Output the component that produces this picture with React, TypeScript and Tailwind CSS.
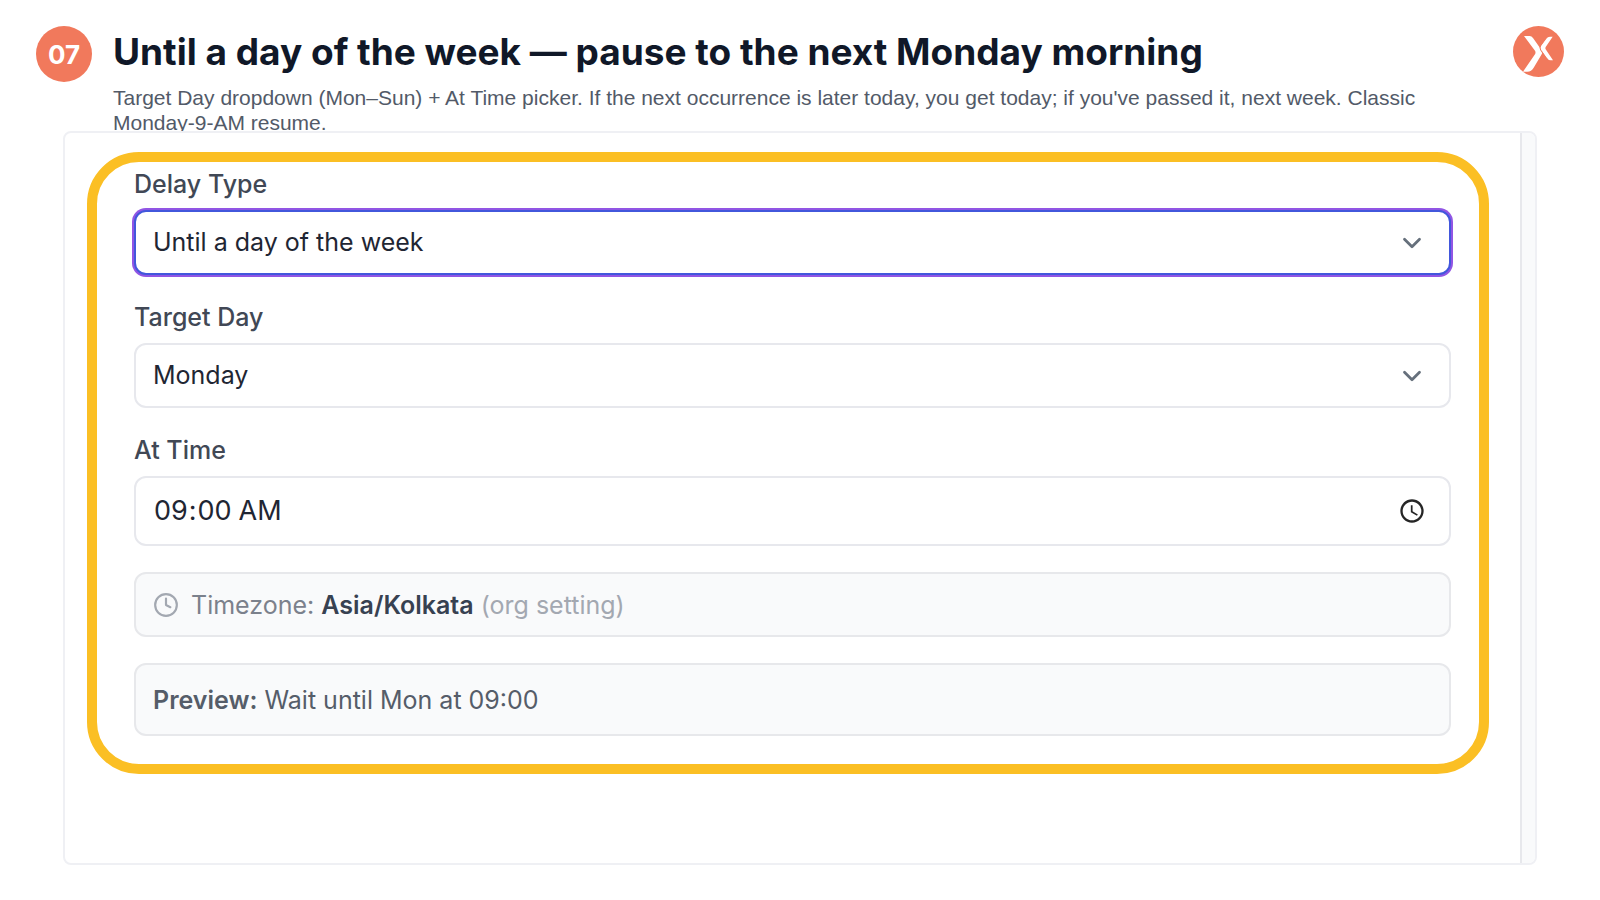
import { useState } from "react";
import type { ReactNode } from "react";
import { ChevronDown, Clock } from "lucide-react";

const DELAY_TYPES = ["Until a day of the week", "For a set period", "Until a date"];
const DAYS = ["Monday", "Tuesday", "Wednesday", "Thursday", "Friday", "Saturday", "Sunday"];

function Logo() {
  return (
    <svg viewBox="0 0 153 153" className="size-[51px] shrink-0" role="img" aria-label="Logo">
      <circle cx="76.5" cy="76.5" r="76.5" fill="#f1795c" />
      <path
        fill="#fff"
        d="M33 30H50Q56 30 60 36L86 73Q90 79 86 85L62 125Q55 137 43 137H30L66 85Q69 79 66 74Z"
      />
      <path fill="#fff" d="M119 32H111Q104 32 100 38L84 60Q80 65 84 71L100 94Q106 103 113 103H120L98 70Q96 67 98 63Z" />
      <path fill="none" stroke="#f1795c" strokeWidth="3" d="M100 34L83 58Q79 65 83 72L101 99" />
    </svg>
  );
}

function Field({ id, label, children }: { id: string; label: string; children: ReactNode }) {
  return (
    <div className="flex flex-col gap-2.5">
      <label htmlFor={id} className="self-start font-medium text-[#414855]">
        {label}
      </label>
      {children}
    </div>
  );
}

function SelectBox({ id, options, active = false }: { id: string; options: string[]; active?: boolean }) {
  const [value, setValue] = useState(options[0]);
  return (
    <div className="relative">
      <select
        id={id}
        value={value}
        onChange={(e) => setValue(e.target.value)}
        className={
          active
            ? "block h-[65px] w-full appearance-none rounded-xl border-2 border-[#4257dc] bg-white px-[17px] pb-0.5 text-[#1f2633] ring-2 ring-[#9155e4] outline-none"
            : "block h-[65px] w-full appearance-none rounded-xl border-2 border-[#e7e8ed] bg-white px-[17px] pb-0.5 text-[#1f2633] outline-none"
        }
      >
        {options.map((o) => (
          <option key={o}>{o}</option>
        ))}
      </select>
      <ChevronDown
        className="pointer-events-none absolute inset-y-0 right-6 my-auto size-[30px] text-[#66707c]"
        strokeWidth={2.25}
      />
    </div>
  );
}

export default function App() {
  return (
    <main className="flex min-h-screen flex-col bg-white font-['Inter','Liberation_Sans',sans-serif]">
      <header className="flex items-start px-9 pt-[26px]">
        <span className="flex size-14 shrink-0 items-center justify-center rounded-full bg-[#f1795c] text-[26px] font-bold text-white">
          07
        </span>
        <div className="ml-[21px] flex-1">
          <h1 className="text-[37px] leading-[52px] font-bold text-[#101828]">
            Until a day of the week — pause to the next Monday morning
          </h1>
          <p className="mt-[7px] max-w-[1340px] font-['Liberation_Sans',sans-serif] text-[21px] leading-[25px] text-[#525a68]">
            Target Day dropdown (Mon–Sun) + At Time picker. If the next occurrence is later today, you get today; if
            you've passed it, next week. Classic Monday-9-AM resume.
          </p>
        </div>
        <Logo />
      </header>

      <section className="relative mx-[63px] -mt-1 mb-[35px] flex flex-1 overflow-hidden rounded-lg border-2 border-[#eff0f4] bg-white">
        <div className="flex-1 pt-[19px] pr-[31px] pl-[22px]">
          <form className="flex flex-col gap-[26px] rounded-[52px] border-10 border-[#fbbf24] pt-1.5 pr-7 pb-7 pl-[37px] text-[25px] leading-8">
            <Field id="delay-type" label="Delay Type">
              <SelectBox id="delay-type" options={DELAY_TYPES} active />
            </Field>
            <Field id="target-day" label="Target Day">
              <SelectBox id="target-day" options={DAYS} />
            </Field>
            <Field id="at-time" label="At Time">
              <input
                id="at-time"
                type="time"
                defaultValue="09:00"
                className="block h-[70px] w-full rounded-xl border-2 border-[#e7e8ed] bg-white pr-5 pl-[17px] text-[27px] text-[#1f2633] outline-none [&::-webkit-calendar-picker-indicator]:opacity-85"
              />
            </Field>
            <p className="flex h-[65px] items-center rounded-xl border-2 border-[#e7e8eb] bg-[#f9fafb] px-[17px] text-[#7b818c]">
              <Clock className="mr-3 size-[26px] text-[#a3a8b1]" strokeWidth={2} />
              <span>
                Timezone: <strong className="font-semibold text-[#374151]">Asia/Kolkata</strong>{" "}
                <span className="text-[#a3a8b1]">(org setting)</span>
              </span>
            </p>
            <p className="flex h-[73px] items-center rounded-xl border-2 border-[#e7e8eb] bg-[#f9fafb] px-[17px] text-[#555d69]">
              <span>
                <strong className="font-semibold">Preview:</strong> Wait until Mon at 09:00
              </span>
            </p>
          </form>
        </div>
        <div className="w-[15px] border-l-2 border-[#e7e8ec] bg-[#f9fafb]" />
      </section>
    </main>
  );
}
